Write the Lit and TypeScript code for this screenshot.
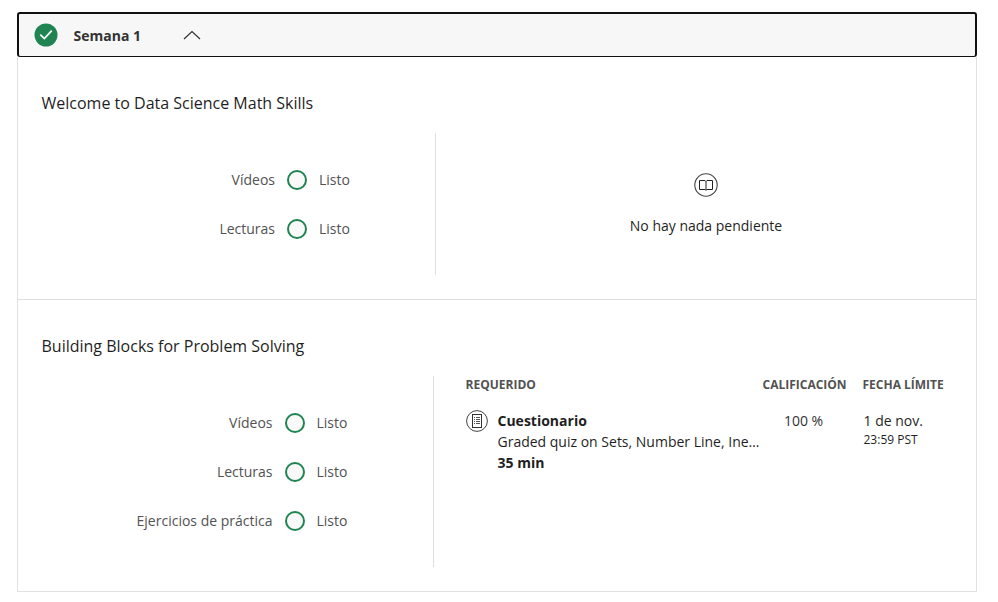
import { LitElement, html, css, svg, nothing } from "lit";
import { customElement, property } from "lit/decorators.js";
import { classMap } from "lit/directives/class-map.js";

interface Assignment {
  kind: string;
  title: string;
  duration: string;
  grade: string;
  day: string;
  time: string;
}

interface Lesson {
  title: string;
  progress: string[];
  assignments: Assignment[];
}

const LESSONS: Lesson[] = [
  {
    title: "Welcome to Data Science Math Skills",
    progress: ["Vídeos", "Lecturas"],
    assignments: [],
  },
  {
    title: "Building Blocks for Problem Solving",
    progress: ["Vídeos", "Lecturas", "Ejercicios de práctica"],
    assignments: [
      {
        kind: "Cuestionario",
        title: "Graded quiz on Sets, Number Line, Ine…",
        duration: "35 min",
        grade: "100 %",
        day: "1 de nov.",
        time: "23:59 PST",
      },
    ],
  },
];

const bookIcon = html`<svg class="book" width="24" height="24" viewBox="0 0 24 24" fill="none">
  <circle cx="12" cy="12" r="11.2" stroke="#444" stroke-width="1.1" />
  <path d="M5.5 7.500H11l1 1 1-1h5.500v9H13l-1 .7-1-.7H5.500z" stroke="#222" />
  <path d="M12 8v9" stroke="#555" stroke-width="1.300" />
</svg>`;

const quizIcon = html`<svg class="quiz" width="22" height="22" viewBox="0 0 22 22" fill="none">
  <circle cx="11" cy="11" r="10.400" stroke="#444" stroke-width="1" />
  <rect x="6.500" y="4.500" width="9" height="13" stroke="#333" />
  ${[7.5, 9.5, 11.5, 13.5].map(
    (y) => svg`<path d="M8 ${y}h1M10 ${y}h4" stroke="#555" />`
  )}
</svg>`;

@customElement("lesson-section")
class LessonSection extends LitElement {
  @property({ attribute: false }) lesson!: Lesson;

  static styles = css`
    :host {
      display: block;
      padding: 33px 24px 24px 23.5px;
    }
    .title {
      margin: 0 0 17px;
      font-size: 16px;
      font-weight: 400;
      line-height: 26px;
      color: #1f1f1f;
    }
    .columns {
      display: grid;
      grid-template-columns: 394.5px 1fr;
    }
    .columns.pending {
      grid-template-columns: 392.5px 1fr;
    }
    .progress {
      display: flex;
      flex-direction: column;
      gap: 19px;
      padding: 32px 0 31px;
      border-right: 1px solid #dedede;
    }
    .step {
      display: grid;
      grid-template-columns: 233.5px 20px auto;
      column-gap: 12px;
      align-items: center;
      height: 30px;
      font-size: 14px;
      color: #525252;
    }
    .pending .step {
      grid-template-columns: 231px 20px auto;
    }
    .label,
    .status {
      padding-bottom: 2px;
    }
    .label {
      text-align: right;
    }
    .ring {
      box-sizing: border-box;
      width: 20px;
      height: 20px;
      border: 2px solid #208452;
      border-radius: 50%;
      background: #f9f9f9;
    }
    .empty {
      display: flex;
      flex-direction: column;
      align-items: center;
      gap: 18px;
      padding: 40px 0 0 24px;
      font-size: 14px;
      line-height: 22px;
      color: #1f1f1f;
    }
    svg {
      display: block;
    }
    .table {
      padding-left: 31.5px;
    }
    .row {
      display: grid;
      grid-template-columns: 297px 100px 1fr;
    }
    .head {
      font-size: 12px;
      font-weight: 700;
      line-height: 18px;
      color: #525252;
    }
    .item {
      margin-top: 16px;
      font-size: 14px;
      line-height: 21px;
      color: #1f1f1f;
    }
    .task {
      display: flex;
      gap: 10px;
      min-width: 0;
    }
    .quiz {
      flex: none;
    }
    .name {
      white-space: nowrap;
    }
    .strong {
      font-weight: 700;
    }
    .grade {
      width: 82px;
      text-align: center;
      color: #333;
    }
    .due {
      padding-left: 1px;
    }
    .time {
      font-size: 12px;
      line-height: 17px;
    }
  `;

  private renderAssignments(items: Assignment[]) {
    return html`<div class="table">
      <div class="row head">
        <span>REQUERIDO</span><span>CALIFICACIÓN</span><span>FECHA LÍMITE</span>
      </div>
      ${items.map(
        (a) => html`<div class="row item">
          <div class="task">
            ${quizIcon}
            <div class="text">
              <div class="strong">${a.kind}</div>
              <div class="name">${a.title}</div>
              <div class="strong">${a.duration}</div>
            </div>
          </div>
          <div class="grade">${a.grade}</div>
          <div class="due">
            <div>${a.day}</div>
            <div class="time">${a.time}</div>
          </div>
        </div>`
      )}
    </div>`;
  }

  render() {
    const { title, progress, assignments } = this.lesson;
    return html`
      <h2 class="title">${title}</h2>
      <div class=${classMap({ columns: true, pending: assignments.length > 0 })}>
        <div class="progress">
          ${progress.map(
            (label) => html`<div class="step">
              <span class="label">${label}</span><span class="ring"></span
              ><span class="status">Listo</span>
            </div>`
          )}
        </div>
        ${assignments.length
          ? this.renderAssignments(assignments)
          : html`<div class="empty">${bookIcon}<span>No hay nada pendiente</span></div>`}
      </div>
    `;
  }
}

@customElement("app-root")
class AppRoot extends LitElement {
  static styles = css`
    :host {
      display: block;
      box-sizing: border-box;
      height: 602px;
      padding: 12px 21px 10px 17px;
      background: #fff;
      font-family: "Open Sans", "Noto Sans", sans-serif;
    }
    .header {
      box-sizing: border-box;
      display: flex;
      align-items: center;
      height: 45px;
      padding-left: 15px;
      border: 2px solid #111;
      border-bottom-width: 1px;
      border-radius: 3px;
      background: #f7f7f7;
    }
    .week {
      margin: 0 42.500px 0 15.500px;
      font-size: 14px;
      font-weight: 700;
      color: #333;
    }
    .body {
      border: 1px solid #e1e1e1;
      border-top: 0;
    }
    .rule {
      height: 1px;
      background: #dedede;
    }
  `;

  render() {
    return html`
      <div class="header">
        <svg width="24" height="24" viewBox="0 0 24 24" fill="none">
          <circle cx="12" cy="12" r="11.500" fill="#208452" />
          <path d="M6.300 11.600l4.100 4 7.300-7.900" stroke="#fff" stroke-width="1.700" />
        </svg>
        <span class="week">Semana 1</span>
        <svg width="18" height="10" viewBox="0 0 18 10" fill="none">
          <path d="M1 9l8-7.500L17 9" stroke="#333" stroke-width="1.200" />
        </svg>
      </div>
      <div class="body">
        ${LESSONS.map(
          (lesson, i) => html`${i ? html`<div class="rule"></div>` : nothing}
            <lesson-section .lesson=${lesson}></lesson-section>`
        )}
      </div>
    `;
  }
}
